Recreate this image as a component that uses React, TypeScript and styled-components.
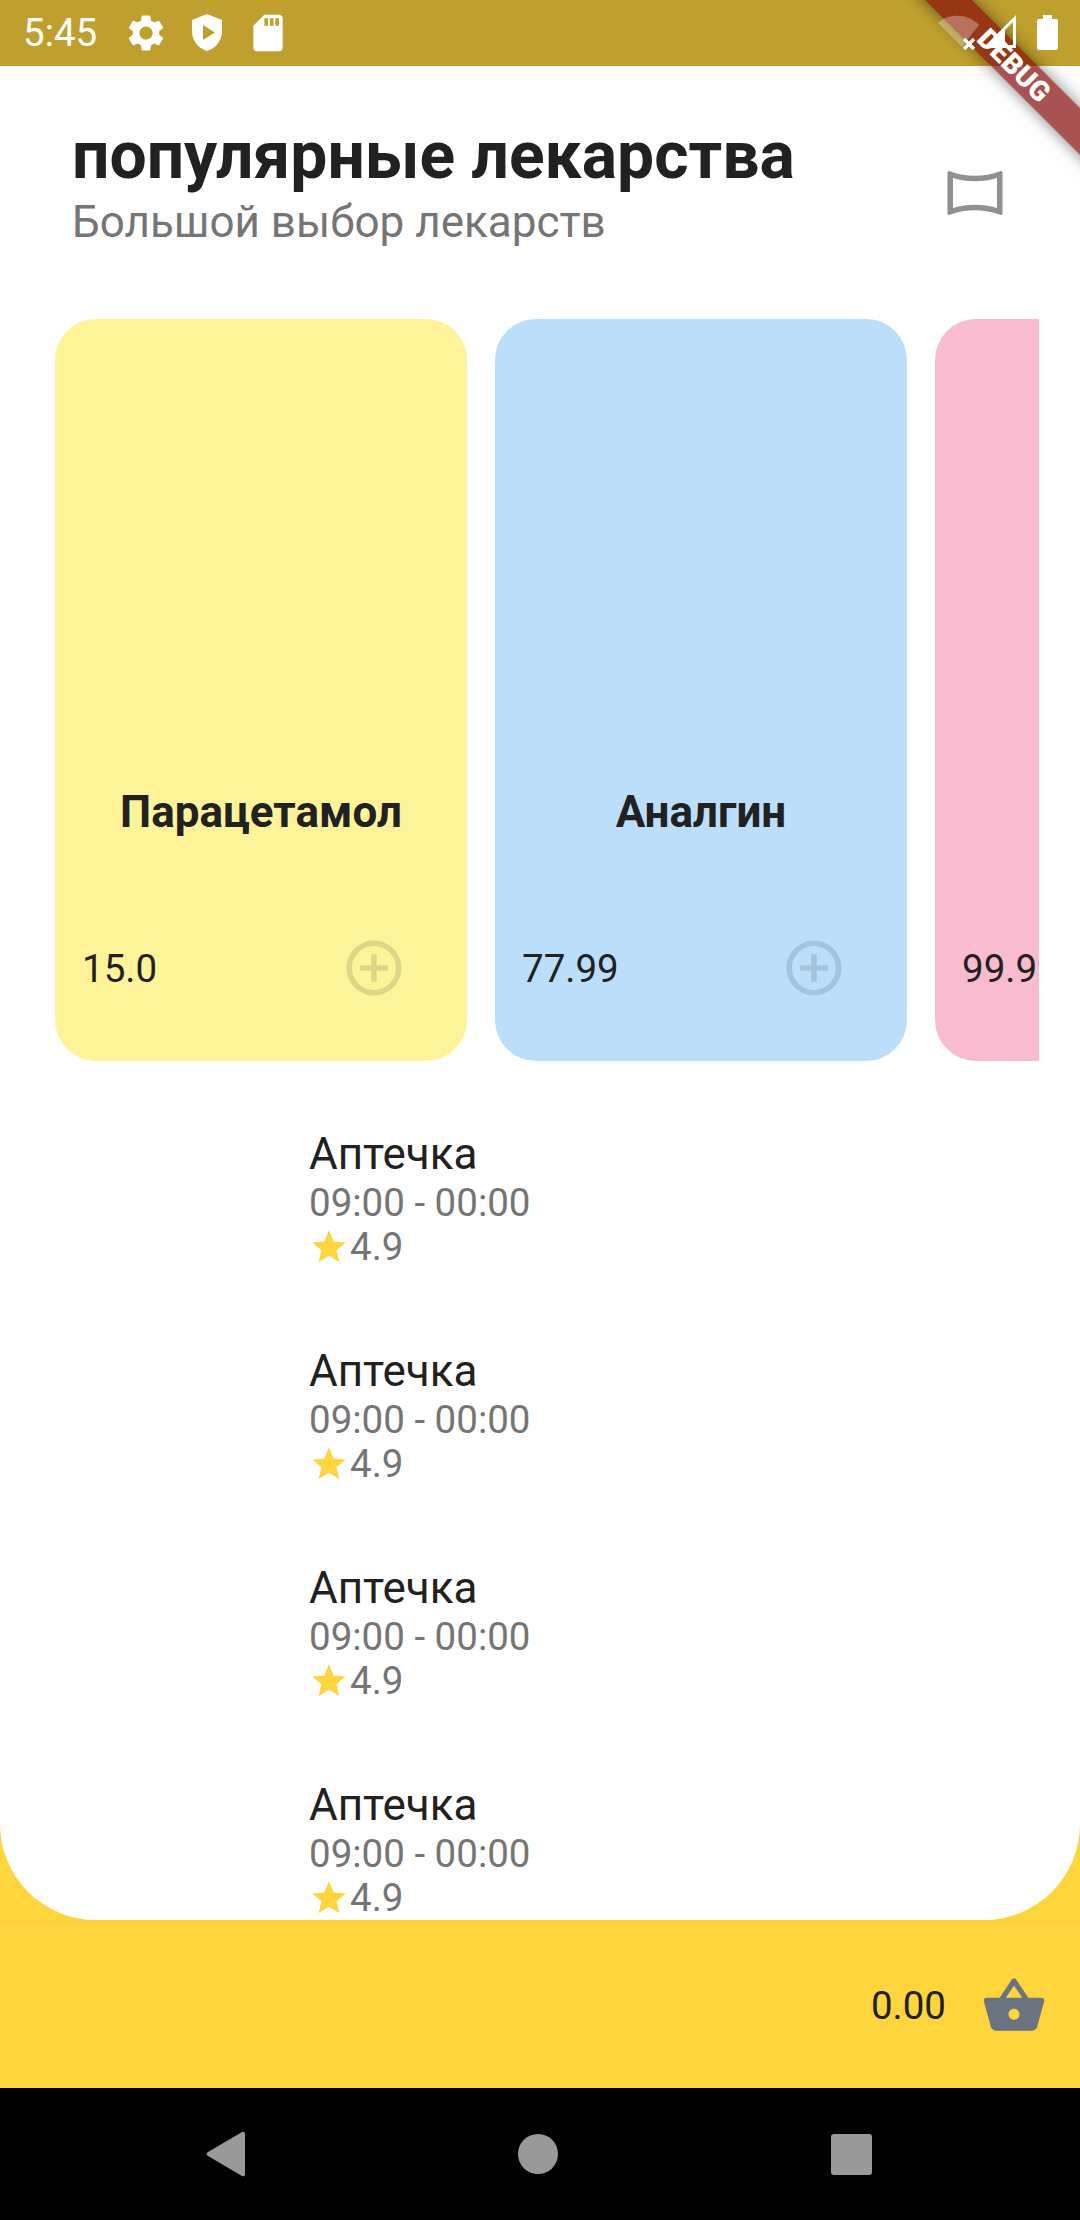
import { createGlobalStyle } from "styled-components";
import styled from "styled-components";
import {
  MdAddCircleOutline,
  MdOutlinePanoramaHorizontal,
  MdSdStorage,
  MdSettings,
  MdShoppingBasket,
  MdStar,
} from "react-icons/md";

const GlobalStyle = createGlobalStyle`
  html, body {
    margin: 0;
    padding: 0;
    background: #000;
  }
  * {
    box-sizing: border-box;
  }
`;

const Screen = styled.div`
  position: relative;
  width: 1080px;
  height: 2220px;
  display: flex;
  flex-direction: column;
  overflow: hidden;
  background: #ffd53d;
  font-family: Roboto, "Noto Sans", sans-serif;
`;

const StatusBar = styled.div`
  height: 66px;
  flex: none;
  display: flex;
  align-items: center;
  padding: 0 18px 0 23px;
  background: #bfa02e;
  color: #fff;
`;

const Clock = styled.span`
  font-size: 38.5px;
  width: 101px;
  margin-top: -2px;
`;

const StatusIcons = styled.div`
  display: flex;
  align-items: center;
  gap: 23px;
  font-size: 44px;
  svg {
    display: block;
  }
`;

// system icons sit above the debug ribbon, as on the device
const SystemIcons = styled.svg`
  position: relative;
  z-index: 2;
  margin-left: auto;
  display: block;
`;

const Panel = styled.main`
  flex: none;
  height: 1854px;
  background: #fff;
  border-radius: 0 0 96px 96px;
  overflow: hidden;
`;

const Header = styled.header`
  display: flex;
  justify-content: space-between;
  align-items: flex-end;
  padding: 49px 72px 0;
`;

const Title = styled.h1`
  margin: 0;
  font-size: 66px;
  font-weight: 700;
  line-height: 81px;
  color: #212121;
`;

const Subtitle = styled.p`
  margin: 0;
  font-size: 44px;
  line-height: 52px;
  color: #757575;
`;

const HeaderIcon = styled.div`
  font-size: 66px;
  line-height: 0;
  color: #909090;
  margin-bottom: 22px;
`;

const Shelf = styled.section`
  display: flex;
  gap: 28px;
  width: 984px;
  margin: 71px 0 0 55px;
  overflow: hidden;
`;

const Card = styled.article<{ $tint: string }>`
  flex: none;
  width: 412px;
  height: 742px;
  display: flex;
  flex-direction: column;
  justify-content: flex-end;
  padding: 0 60px 60px 27px;
  border-radius: 41px;
  background: ${(props) => props.$tint};
`;

const CardName = styled.div`
  margin: 0 -33px 97px 0;
  min-height: 52px;
  font-size: 44px;
  font-weight: 700;
  line-height: 52px;
  text-align: center;
  color: #212121;
`;

const CardFooter = styled.div`
  display: flex;
  align-items: center;
  justify-content: space-between;
  height: 66px;
  white-space: nowrap;
`;

const Price = styled.span`
  font-size: 38.5px;
  color: #212121;
`;

const AddIcon = styled.span`
  flex: none;
  font-size: 66px;
  line-height: 0;
  color: rgba(0, 0, 0, 0.12);
`;

const List = styled.section`
  display: flex;
  flex-direction: column;
  gap: 78px;
  margin-top: 69px;
  padding-left: 309px;
`;

const Pharmacy = styled.div`
  display: flex;
  flex-direction: column;
`;

const PharmacyName = styled.div`
  font-size: 44px;
  line-height: 48px;
  color: #212121;
`;

const Hours = styled.div`
  margin-top: 3px;
  font-size: 38.5px;
  line-height: 44px;
  color: #757575;
`;

const Rating = styled.div`
  display: flex;
  align-items: center;
  font-size: 38.5px;
  line-height: 44px;
  color: #757575;
  svg {
    flex: none;
    color: #ffd53d;
    margin-right: 1px;
  }
`;

const Footer = styled.footer`
  flex: 1;
  display: flex;
  align-items: center;
  justify-content: flex-end;
  gap: 35px;
  padding-right: 33px;
  border-top: 3px solid #fbd03c;
`;

const Total = styled.span`
  font-size: 38.5px;
  color: #212121;
`;

const BasketIcon = styled.span`
  font-size: 66px;
  line-height: 0;
  color: #6b7280;
`;

const NavBar = styled.nav`
  height: 132px;
  flex: none;
  display: flex;
  align-items: center;
  justify-content: center;
  gap: 273px;
  padding-right: 2px;
  background: #000;
  svg {
    display: block;
  }
`;

const DebugBanner = styled.div`
  position: absolute;
  z-index: 1;
  top: 49px;
  left: 864px;
  width: 300px;
  height: 33px;
  display: flex;
  align-items: center;
  justify-content: center;
  transform: rotate(45deg);
  background: rgba(134, 8, 8, 0.7);
  box-shadow: 0 0 16px rgba(0, 0, 0, 0.5);
  color: #fff;
  font-size: 28px;
  font-weight: 900;
  line-height: 1;
`;

const ShieldPlay = () => (
  <svg width="32" height="38" viewBox="0 0 32 38" fill="#fff">
    <path
      fillRule="evenodd"
      d="M16 0 L31 6 V17 C31 27 24.5 34.5 16 37 C7.5 34.5 1 27 1 17 V6 Z M12 11 V26 L24 18.5 Z"
    />
  </svg>
);

const medicines = [
  { name: "Парацетамол", price: "15.0", tint: "#fff39a" },
  { name: "Аналгин", price: "77.99", tint: "#bbdefb" },
  { name: "", price: "99.99", tint: "#f8bbd0" },
];

function App() {
  return (
    <Screen>
      <GlobalStyle />
      <StatusBar>
        <Clock>5:45</Clock>
        <StatusIcons>
          <MdSettings />
          <ShieldPlay />
          <MdSdStorage />
        </StatusIcons>
        <SystemIcons width="124" height="40" viewBox="0 0 124 40" fill="#fff">
          <path d="M0 10 C10 0 30 0 41 12 L24 34 Z" opacity="0.3" />
          <path d="M26 26 L36 36 M36 26 L26 36" stroke="#fff" strokeWidth="3.5" />
          <path
            fillRule="evenodd"
            d="M45 35 L78 2 V35 Z M67 17 V32 H75 V9 Z"
          />
          <path d="M105 2 h9 v4 h4 a2 2 0 0 1 2 2 v27 a2 2 0 0 1 -2 2 h-17 a2 2 0 0 1 -2 -2 v-27 a2 2 0 0 1 2 -2 h4 Z" />
        </SystemIcons>
      </StatusBar>
      <Panel>
        <Header>
          <div>
            <Title>популярные лекарства</Title>
            <Subtitle>Большой выбор лекарств</Subtitle>
          </div>
          <HeaderIcon>
            <MdOutlinePanoramaHorizontal />
          </HeaderIcon>
        </Header>
        <Shelf>
          {medicines.map((item) => (
            <Card key={item.price} $tint={item.tint}>
              <CardName>{item.name}</CardName>
              <CardFooter>
                <Price>{item.price}</Price>
                <AddIcon>
                  <MdAddCircleOutline />
                </AddIcon>
              </CardFooter>
            </Card>
          ))}
        </Shelf>
        <List>
          {[0, 1, 2, 3].map((i) => (
            <Pharmacy key={i}>
              <PharmacyName>Аптечка</PharmacyName>
              <Hours>09:00 - 00:00</Hours>
              <Rating>
                <MdStar size={40} />
                4.9
              </Rating>
            </Pharmacy>
          ))}
        </List>
      </Panel>
      <Footer>
        <Total>0.00</Total>
        <BasketIcon>
          <MdShoppingBasket />
        </BasketIcon>
      </Footer>
      <NavBar>
        <svg width="39" height="46" viewBox="0 0 39 46" fill="#999">
          <path d="M36 1 Q39 0 39 3 V43 Q39 46 36 45 L2 25 Q-1 23 2 21 Z" />
        </svg>
        <svg width="40" height="40" viewBox="0 0 40 40" fill="#999">
          <circle cx="20" cy="20" r="20" />
        </svg>
        <svg width="41" height="41" viewBox="0 0 41 41" fill="#999">
          <rect width="41" height="41" rx="3" />
        </svg>
      </NavBar>
      <DebugBanner>DEBUG</DebugBanner>
    </Screen>
  );
}

export default App;
